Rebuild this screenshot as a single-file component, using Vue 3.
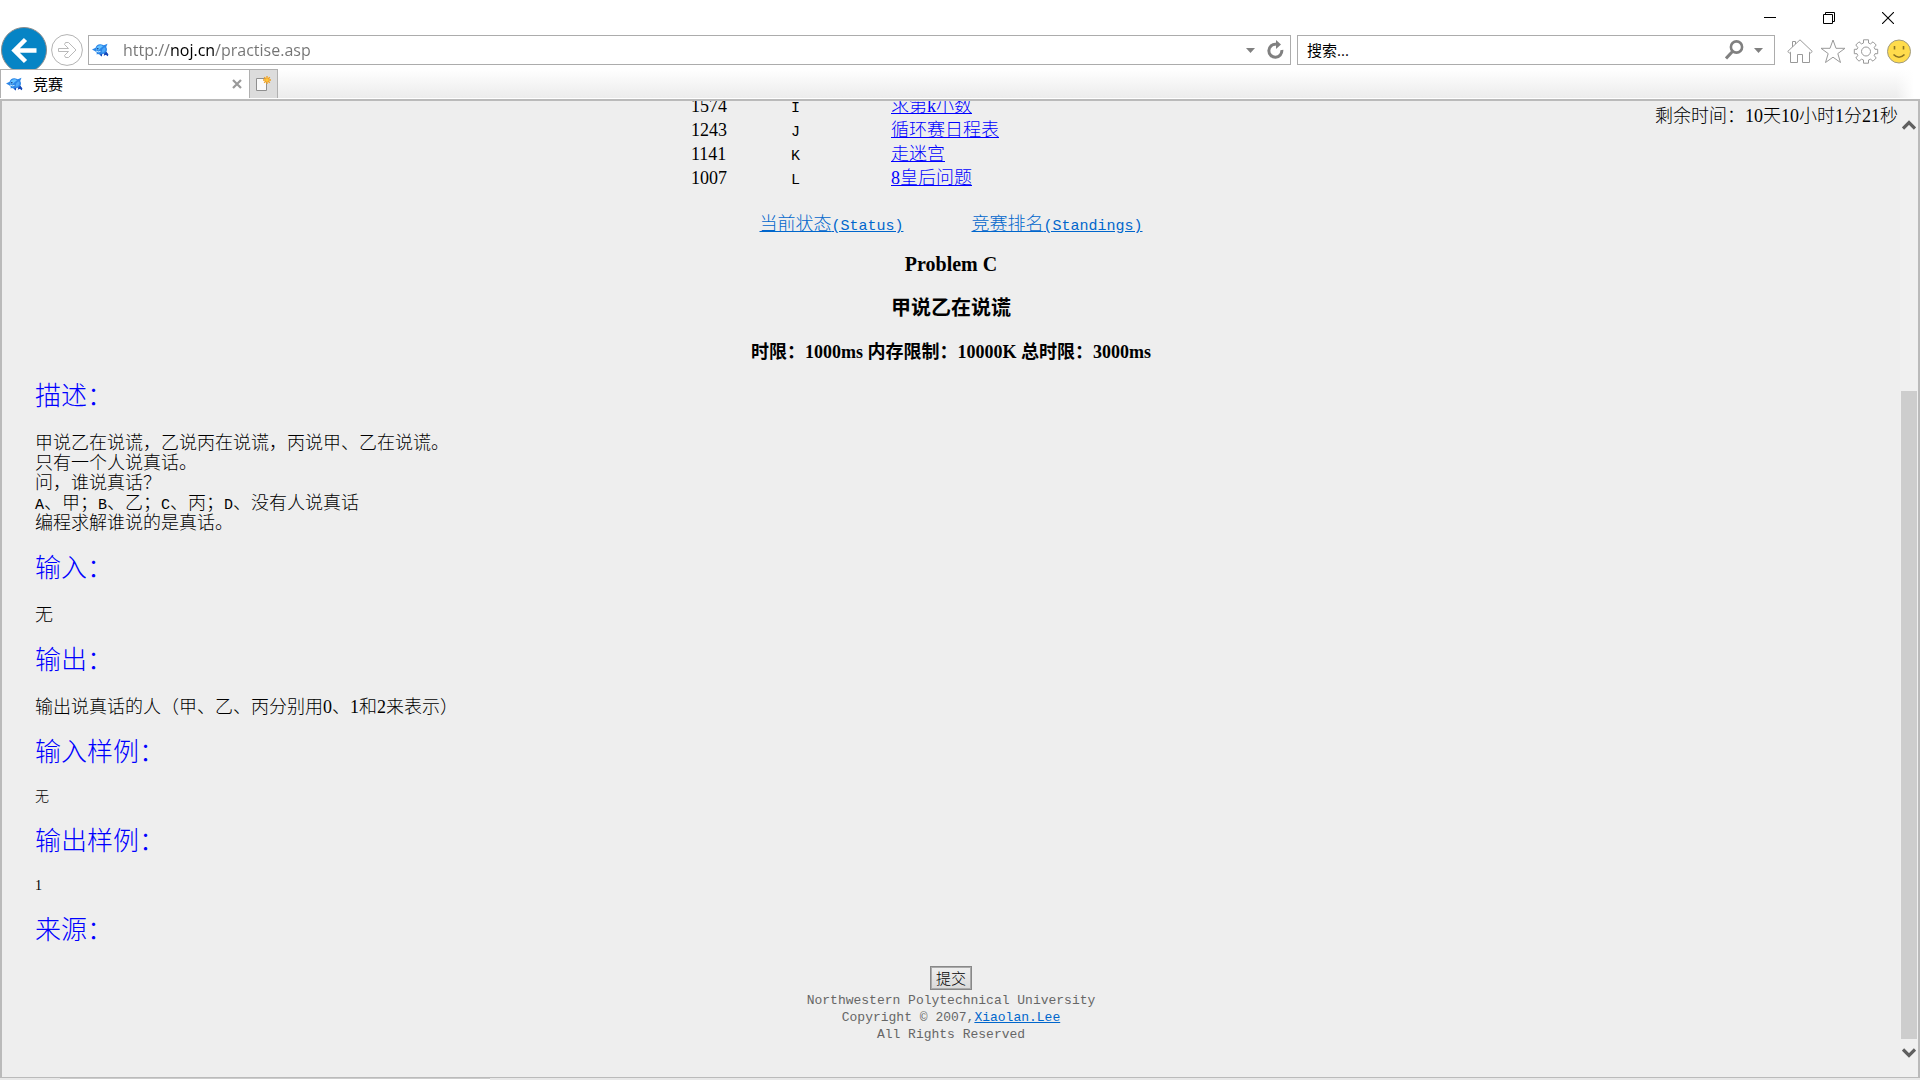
<script setup>
const problems = [
  { id: '1574', label: 'I', title: '求第k小数' },
  { id: '1243', label: 'J', title: '循环赛日程表' },
  { id: '1141', label: 'K', title: '走迷宫' },
  { id: '1007', label: 'L', title: '8皇后问题' }
]

const sections = [
  {
    title: '描述：',
    lines: [
      '甲说乙在说谎，乙说丙在说谎，丙说甲、乙在说谎。',
      '只有一个人说真话。',
      '问，谁说真话？',
      'A、甲；B、乙；C、丙；D、没有人说真话',
      '编程求解谁说的是真话。'
    ]
  },
  { title: '输入：', lines: ['无'] },
  { title: '输出：', lines: ['输出说真话的人（甲、乙、丙分别用0、1和2来表示）'] },
  { title: '输入样例：', lines: ['无'], sample: true },
  { title: '输出样例：', lines: ['1'], sample: true },
  { title: '来源：', lines: [] }
]

// Latin capitals are set in the fixed-width face, so a line is split around them
const parts = (line) => line.split(/([A-Z])/).filter(Boolean)
const isLatin = (part) => /^[A-Z]$/.test(part)
</script>

<template>
  <div class="browser">
    <svg class="defs" width="0" height="0" aria-hidden="true">
      <symbol id="dolphin" viewBox="0 0 17 15">
        <path d="M0 6.500 3.600 4.800C4 2.500 6 1 8.500 1.200 10 1.300 11 1.800 11.800 2.300L15.500 .8 14.200 4C15.300 5.500 15.200 7.300 14.300 8.800L16.300 11.500 15.800 13.200 14 11.800 11.800 12.600 12.200 10.800 10.200 11 9.800 13.600 7.800 11.800 6 10.900 4.600 11.400 4.800 9.800 3.200 8.200Z" fill="#2b86e8" />
        <path d="M4.600 5C5.200 2.900 7 2 9.200 2.300L11 3.200 8.200 5.400 6.500 7.500 4.300 6.800Z" fill="#63c1ff" />
        <path d="M10.200 6.500 12 4.500 13.400 4.800 13.500 7.500 11.500 9.500 9.500 9.500Z" fill="#4fa9f8" />
        <path d="M14.300 8.800 16.300 11.500 15.800 13.200 14 11.800 11.800 12.600 12.200 10.800ZM10.200 11 9.800 13.600 7.800 11.800Z" fill="#1744b4" />
        <path d="M4 8Q6.500 9.600 8.500 8.400" fill="none" stroke="#c8ecff" />
        <circle cx="5.800" cy="5.800" r=".8" fill="#0c2f80" />
      </symbol>
    </svg>

    <header class="titlebar">
      <button class="win" aria-label="最小化">
        <svg width="12" height="12"><path d="M0 5.500H12" stroke="#000" /></svg>
      </button>
      <button class="win" aria-label="还原">
        <svg width="12" height="12"><path d="M.5 2.500H9.500V11.500H.5ZM2.500 2.500V.5H11.500V9.500H9.500" fill="none" stroke="#000" /></svg>
      </button>
      <button class="win" aria-label="关闭">
        <svg width="12" height="12"><path d="M0 0 12 12M12 0 0 12" stroke="#000" stroke-width="1.100" /></svg>
      </button>
    </header>

    <nav class="navbar">
      <button class="back" aria-label="后退">
        <svg width="46" height="42" viewBox="0 0 46 42">
          <circle cx="23" cy="23" r="22.500" fill="#0684c5" stroke="#8b8b8b" />
          <path d="M35.500 23.500H13M24.500 12.500 13.500 23.500 24.500 34.500" fill="none" stroke="#fff" stroke-width="4.500" />
        </svg>
      </button>
      <button class="forward" aria-label="前进">
        <svg width="32" height="32" viewBox="0 0 32 32">
          <circle cx="16" cy="16" r="15.400" fill="#fff" stroke="#b3b3b3" />
          <path d="M7.500 14.500H17.500L13.500 10.500 14.500 8.500H17.500L25 16 17.500 23.500H14.500L13.500 21.500 17.500 17.500H7.500Z" fill="none" stroke="#b9b9b9" />
        </svg>
      </button>
      <div class="address">
        <svg width="17" height="15"><use href="#dolphin" /></svg>
        <input class="url" type="text" aria-label="地址" value="http://noj.cn/practise.asp" />
        <svg width="9" height="5"><path d="M0 0H9L4.500 5Z" fill="#808080" /></svg>
        <button class="plain" aria-label="刷新">
          <svg width="17" height="20" viewBox="0 0 17 20">
            <path d="M9 4.300A6.500 6.500 0 1 0 14.800 10" fill="none" stroke="#808080" stroke-width="3" />
            <path d="M9 0 14 4.500 9 9Z" fill="#808080" />
          </svg>
        </button>
      </div>
      <div class="search">
        <input class="query" type="text" aria-label="搜索" value="搜索..." />
        <button class="plain" aria-label="搜索">
          <svg width="19" height="20" viewBox="0 0 19 20">
            <circle cx="11.500" cy="7" r="5.600" fill="none" stroke="#808080" stroke-width="2.600" />
            <path d="M7.500 11.500 1 18.500" stroke="#808080" stroke-width="3" />
          </svg>
        </button>
        <svg width="9" height="5"><path d="M0 0H9L4.500 5Z" fill="#808080" /></svg>
      </div>
      <div class="tools">
        <button class="plain" aria-label="主页">
          <svg width="26" height="25" viewBox="0 0 26 25">
            <path d="M.7 12.500 13 .8 25.300 12.500 23.500 14 22.500 13.200V23.500H15.500V15.500H10.500V23.500H3.500V13.200L2.500 14ZM5.500 8V2.500H8.500V5" fill="none" stroke="#999" />
          </svg>
        </button>
        <button class="plain" aria-label="收藏夹">
          <svg width="26" height="25" viewBox="0 0 26 25">
            <path d="M13 1 16 9.300H25L17.800 14.600 20.500 23.500 13 18.200 5.500 23.500 8.200 14.600 1 9.300H10Z" fill="none" stroke="#999" />
          </svg>
        </button>
        <button class="plain" aria-label="工具">
          <svg width="26" height="25" viewBox="0 0 26 25">
            <path d="M10.500 .8H15.500V4L17.500 4.900 20 2.800 23.200 6 21.200 8.500 22 10.300H24.700V14.700H22L21.200 16.500 23.200 19 20 22.200 17.500 20.200 15.500 21V24.200H10.500V21L8.500 20.200 6 22.200 2.800 19 4.800 16.500 4 14.700H1.300V10.300H4L4.800 8.500 2.800 6 6 2.800 8.500 4.900 10.500 4Z" fill="none" stroke="#999" stroke-linejoin="round" />
            <circle cx="13" cy="12.500" r="4.500" fill="none" stroke="#999" />
          </svg>
        </button>
        <button class="plain" aria-label="反馈">
          <svg width="26" height="25" viewBox="0 0 26 25">
            <circle cx="13" cy="12.500" r="11.500" fill="#ffdc4c" stroke="#a09a80" />
            <path d="M8.500 7V10.500M17.500 7V10.500" stroke="#8b7423" stroke-width="1.600" />
            <path d="M7.500 15.500Q13 21 18.500 15.500" fill="none" stroke="#8b7423" stroke-width="1.600" />
          </svg>
        </button>
      </div>
    </nav>

    <div class="tabs">
      <div class="tab">
        <svg width="17" height="15"><use href="#dolphin" /></svg>
        <span class="tab-title">竞赛</span>
        <button class="plain" aria-label="关闭标签页">
          <svg width="10" height="10"><path d="M1 1 9 9M9 1 1 9" stroke="#999" stroke-width="2.200" /></svg>
        </button>
      </div>
      <button class="new-tab" aria-label="新建标签页">
        <svg width="15" height="16" viewBox="0 0 15 16">
          <path d="M.5 2.500H10.500V14.500H.5Z" fill="#fafafa" stroke="#8f8f8f" />
          <path d="M11 0V8M7 4H15M8.200 1.200 13.800 6.800M13.800 1.200 8.200 6.800" stroke="#f0a020" stroke-width="1.300" />
          <circle cx="11" cy="4" r="1.800" fill="#ffc53a" />
        </svg>
      </button>
      <div class="strip"></div>
    </div>

    <div class="viewport">
      <main class="page">
        <p class="timer">剩余时间：10天10小时1分21秒</p>

        <table class="problems">
          <tbody>
            <tr v-for="p in problems" :key="p.id">
              <td>{{ p.id }}</td>
              <td><span class="latin">{{ p.label }}</span></td>
              <td class="name"><a href="#">{{ p.title }}</a></td>
            </tr>
          </tbody>
        </table>

        <p class="links">
          <a href="#">当前状态<span class="latin">(Status)</span></a>
          <a href="#">竞赛排名<span class="latin">(Standings)</span></a>
        </p>

        <h3 class="heading first">Problem C</h3>
        <h3 class="heading">甲说乙在说谎</h3>
        <h4 class="heading limits">时限：1000ms 内存限制：10000K 总时限：3000ms</h4>

        <section v-for="s in sections" :key="s.title" class="section">
          <h2>{{ s.title }}</h2>
          <div v-if="s.lines.length" class="text" :class="{ sample: s.sample }">
            <p v-for="line in s.lines" :key="line">
              <span v-for="(part, i) in parts(line)" :key="i" :class="{ latin: isLatin(part) }">{{ part }}</span>
            </p>
          </div>
        </section>

        <footer class="footer">
          <button class="submit">提交</button>
          <p>Northwestern Polytechnical University</p>
          <p>Copyright © 2007,<a href="#">Xiaolan.Lee</a></p>
          <p>All Rights Reserved</p>
        </footer>
      </main>

      <div class="scrollbar" aria-hidden="true">
        <svg width="14" height="10"><path d="M1 8.500 7 2.500 13 8.500" fill="none" stroke="#606060" stroke-width="3.200" /></svg>
        <div class="track"><div class="thumb"></div></div>
        <svg width="14" height="10"><path d="M1 1.500 7 7.500 13 1.500" fill="none" stroke="#606060" stroke-width="3.200" /></svg>
      </div>
    </div>
    <div class="edge"><div class="edge-panel"></div></div>
  </div>
</template>

<style>
body {
  margin: 0;
  background: #fff;
}
</style>

<style scoped>
.browser {
  display: flex;
  flex-direction: column;
  height: 100vh;
  overflow: hidden;
  background: #fff;
  font-family: "Liberation Serif", "Noto Sans CJK SC", serif;
  color: #000;
}
svg {
  display: block;
  flex: none;
}
.defs {
  position: absolute;
}
button {
  padding: 0;
  border: 0;
  background: none;
}
p, h2, h3, h4 {
  margin: 0;
}

.titlebar {
  display: flex;
  justify-content: flex-end;
  flex: none;
  height: 35px;
  padding-right: 3px;
}
.win {
  display: flex;
  justify-content: center;
  width: 59px;
  padding-top: 12px;
}

.navbar {
  display: flex;
  flex: none;
  height: 30px;
  margin-bottom: 4px;
}
.back {
  width: 46px;
  height: 42px;
  margin: -8px 4px 0 1px;
}
.forward {
  width: 32px;
  height: 32px;
  margin: -1px 5px 0 0;
}
.address,
.search {
  display: flex;
  align-items: center;
  box-sizing: border-box;
  border: 1px solid #acacac;
}
.address {
  flex: 1;
  gap: 12px;
  padding: 0 6px 0 3px;
  margin-right: 6px;
}
.search {
  width: 478px;
  gap: 10px;
  padding: 0 11px 0 9px;
}
.url,
.query {
  flex: 1;
  box-sizing: border-box;
  min-width: 0;
  height: 28px;
  padding: 0;
  border: 0;
  outline: 0;
  background: none;
}
.url {
  margin-left: 2px;
  font: 16px "Open Sans", sans-serif;
  color: transparent;
  background: linear-gradient(90deg, #737373 48px, #000 48px, #000 92px, #737373 92px);
  -webkit-background-clip: text;
  background-clip: text;
}
.query {
  padding-bottom: 2px;
  font: 15px "Open Sans", "Noto Sans CJK SC", sans-serif;
  color: #000;
}
.tools {
  display: flex;
  align-items: center;
  gap: 7px;
  padding: 2px 8px 0 12px;
}

.tabs {
  display: flex;
  flex: none;
  height: 29px;
  margin-bottom: 1px;
}
.tab {
  display: flex;
  align-items: center;
  box-sizing: border-box;
  width: 250px;
  padding: 0 7px 0 5px;
  border: 1px solid #b0b0b0;
  border-bottom: 0;
  background: #fff;
}
.tab-title {
  flex: 1;
  margin-left: 10px;
  padding-bottom: 2px;
  font: 15px "Noto Sans CJK SC", sans-serif;
}
.new-tab {
  display: flex;
  align-items: center;
  justify-content: center;
  width: 28px;
  border: 1px solid #b0b0b0;
  border-left: 0;
  border-bottom: 0;
  background: #dcdcdc;
}
.strip {
  flex: 1;
  background: linear-gradient(90deg, transparent calc(100% - 24px), #fff calc(100% - 6px)), linear-gradient(#fff, #ececec);
}

.viewport {
  display: flex;
  flex: 1;
  min-height: 0;
  border: 2px solid #bababa;
  border-bottom-width: 1px;
  background: #eee;
}
.page {
  position: relative;
  flex: 1;
  overflow: hidden;
  font-size: 18px;
  font-weight: 300;
  line-height: 20px;
}
.timer {
  position: absolute;
  top: 5px;
  right: 2px;
}
.problems {
  width: 520px;
  margin: -7px auto 0;
  border-collapse: collapse;
  table-layout: fixed;
}
.problems td {
  width: 100px;
  height: 24px;
  padding: 0;
  line-height: 24px;
}
.problems .name {
  width: 320px;
}
.problems a {
  color: #00f;
}
a {
  color: #06c;
}
.links {
  display: flex;
  justify-content: center;
  gap: 68px;
  margin-top: 22px;
  line-height: 24px;
}
.latin {
  font-family: "Liberation Mono", monospace;
  font-size: 15px;
  line-height: 1;
}
.heading {
  margin-top: 20px;
  font-size: 20px;
  line-height: 24px;
  font-weight: 700;
  text-align: center;
}
.first {
  margin-top: 16px;
}
.limits {
  font-size: 18px;
}
.section {
  padding-left: 33px;
}
.section h2 {
  margin: 15px 0;
  font-size: 26px;
  font-weight: 300;
  line-height: 30px;
  color: #00f;
}
.heading + .section h2 {
  margin-top: 18px;
}
.text {
  padding: 6px 0;
}
.sample {
  padding: 4px 0 5px;
  font-size: 14px;
}
.footer {
  margin-top: 20px;
  text-align: center;
  font: 13px "Liberation Mono", monospace;
  line-height: 17px;
  color: #666;
}
.submit {
  width: 42px;
  height: 24px;
  margin-bottom: 2px;
  border: 1px solid #888;
  box-shadow: inset 0 0 0 1px #aaa;
  background: linear-gradient(#efefef, #dadada);
  font: 15px "Noto Sans CJK SC", sans-serif;
  font-weight: 300;
  line-height: 20px;
  color: #000;
}

.scrollbar {
  display: flex;
  flex-direction: column;
  align-items: center;
  box-sizing: border-box;
  width: 18px;
  padding: 19px 1px 19px 0;
  background: #f0f0f0;
}
.track {
  flex: 1;
  width: 16px;
  margin: 9px 0;
  display: flex;
  align-items: flex-end;
}
.thumb {
  width: 16px;
  height: 72%;
  background: #cdcdcd;
}
.edge {
  display: flex;
  flex: none;
  height: 2px;
  background: #e8e8e8;
}
.edge-panel {
  box-sizing: border-box;
  width: 430px;
  margin-left: 60px;
  border-top: 1px solid #ccc;
  background: #fff;
}
</style>
